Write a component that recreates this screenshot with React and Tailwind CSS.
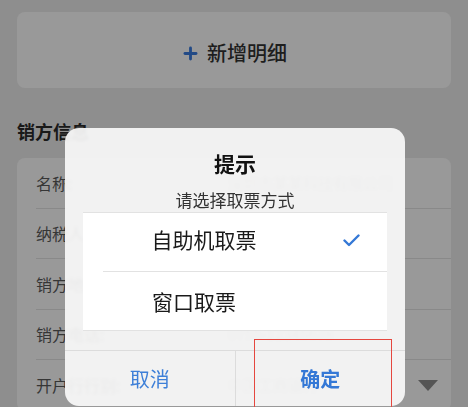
import { Plus } from 'lucide-react';

const rows = [
  { label: '名称:', value: '深圳市某某科技有限公司' },
  { label: '纳税人识别号:', value: '91440300MA5XXXXXXX' },
  { label: '销方地址:', value: '深圳市南山区科技园' },
  { label: '销方电话:', value: '0755-12345678' },
  { label: '开户行行别:', value: '中国工商银行', select: true },
];

function Check() {
  return (
    <svg width="17" height="13" viewBox="0 0 17 13" fill="none">
      <path d="M1.5 6.5 L6 11 L15.5 1.5" stroke="#3478d6" strokeWidth="2.4" strokeLinecap="round" strokeLinejoin="round" />
    </svg>
  );
}

export default function App() {
  return (
    <div
      className="relative h-[407px] w-[468px] overflow-hidden bg-[#ededed]"
      style={{ fontFamily: '"Noto Sans CJK SC", "Noto Sans", sans-serif' }}
    >
      {/* page */}
      <div className="px-[17px] pt-[12px]">
        <div className="flex h-[76px] items-center justify-center gap-[7px] rounded-[8px] bg-white pt-[6px]">
          <Plus size={19} strokeWidth={3.6} className="text-[#3a7ce0]" />
          <span className="text-[20px] font-medium leading-none text-[#333]">新增明细</span>
        </div>

        <h2 className="mt-[30px] h-[26px] text-[18px] font-bold leading-[26px] text-[#2a2a2a]">销方信息</h2>

        <div className="mt-[14px] rounded-[8px] bg-white pl-[19px]">
          {rows.map((r) => (
            <div
              key={r.label}
              className="flex h-[50.5px] items-center border-b border-[#e4e4e4] text-[16px] last:border-b-0"
            >
              <span className="w-[192px] shrink-0 text-[#5a5a5a]">{r.label}</span>
              <span className="flex-1 text-[15px] text-[#b4b4b4]">{r.value}</span>
              {r.select && (
                <svg width="20" height="11" viewBox="0 0 20 11" className="mr-[13px]">
                  <path d="M0 0 H20 L10 11 Z" fill="#8e8e8e" />
                </svg>
              )}
            </div>
          ))}
        </div>
      </div>

      {/* mask */}
      <div className="absolute inset-0 bg-black/40" />

      {/* dialog */}
      <div className="absolute left-[65px] top-[128px] flex h-[278px] w-[340px] flex-col rounded-[14px] bg-[#f9f9f9]/[0.93] backdrop-blur-[1.5px]">
        <div className="pt-[21px] text-center text-[21px] font-bold leading-[28px] text-[#111]">提示</div>
        <div className="mt-[11px] text-center text-[17px] leading-[24px] text-[#333]">请选择取票方式</div>

        <div className="mx-[18px] border-y border-[#e2e2e2] bg-white">
          <div className="flex h-[58px] items-center pb-[4px]">
            <span className="flex-1 text-center text-[21px] text-[#1a1a1a]">自助机取票</span>
            <span className="flex w-[62px] items-center justify-center pr-[10px]">
              <Check />
            </span>
          </div>
          <div className="ml-[20px] border-t border-[#e2e2e2]" />
          <div className="flex h-[58px] items-center pt-[2px]">
            <span className="flex-1 pr-[82px] text-center text-[21px] text-[#1a1a1a]">窗口取票</span>
          </div>
        </div>

        <div className="mt-[19px] flex flex-1 border-t border-[#dcdcdc]">
          <button className="flex flex-1 items-center justify-center border-r border-[#dcdcdc] text-[20px] text-[#3d7fd8]">
            取消
          </button>
          <button className="flex flex-1 items-center justify-center text-[20px] font-semibold text-[#3478d6]">
            确定
          </button>
        </div>
      </div>

      {/* highlight box */}
      <div className="absolute left-[254px] top-[339px] h-[80px] w-[138px] border-[1.5px] border-[#e5473f]" />
    </div>
  );
}
